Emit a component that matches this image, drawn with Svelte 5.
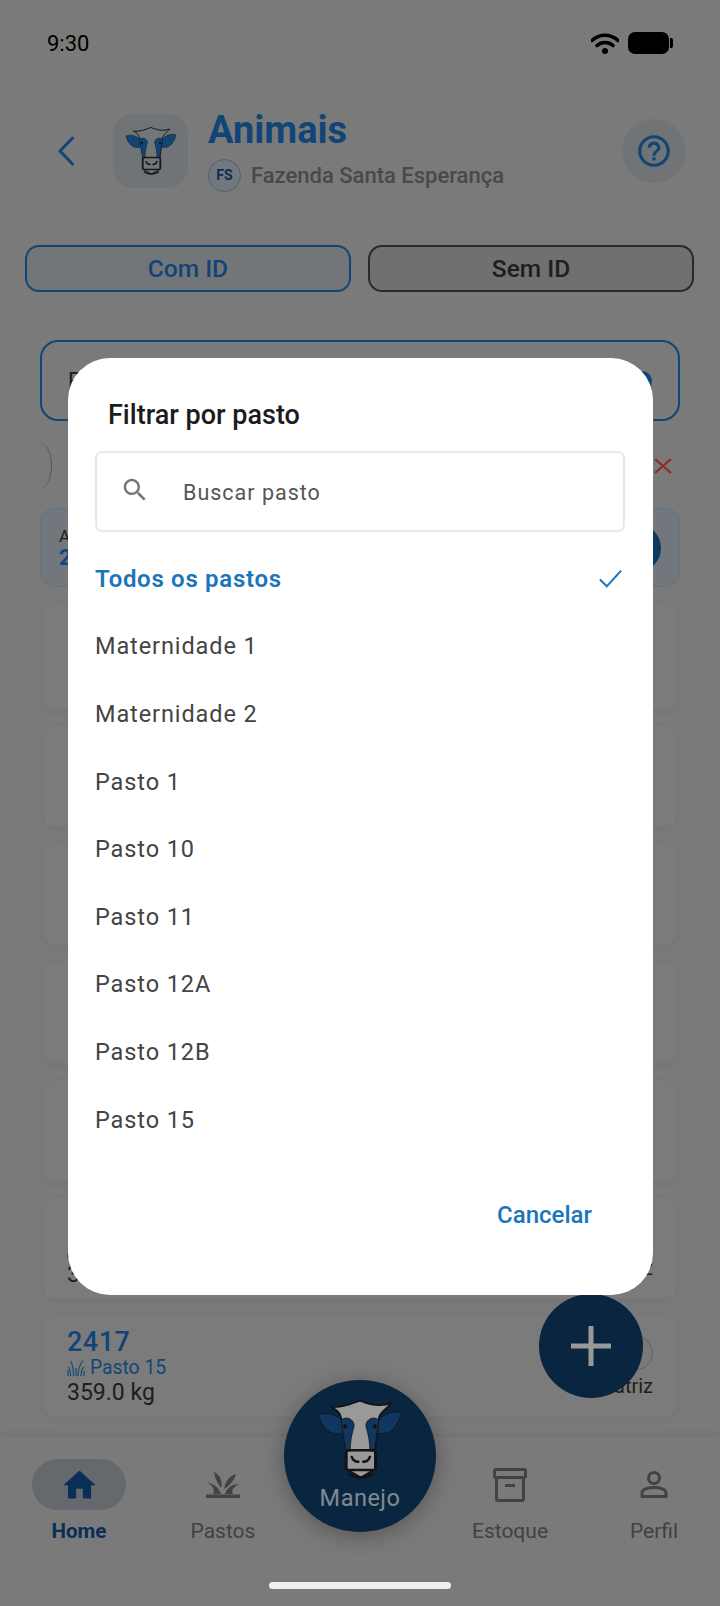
<script>
  // only the last two cards show above and below the modal
  let cards = [
    {}, {}, {}, {}, {},
    { id: '2415', pasto: 'Pasto 15', peso: '347.0 kg', tipo: 'Matriz' },
    { id: '2417', pasto: 'Pasto 15', peso: '359.0 kg', tipo: 'Matriz' }
  ];

  let pastos = ['Maternidade 1', 'Maternidade 2', 'Pasto 1', 'Pasto 10', 'Pasto 11', 'Pasto 12A', 'Pasto 12B', 'Pasto 15'];
</script>

{#snippet cow(cls)}
  <svg class={cls} viewBox="-2 -3 104 100">
    <path class="ear" d="M0 17C10 13 22 17 29 25L31 38C20 44 5 38 0 17Z" />
    <path class="ear" d="M100 15C90 11 78 16 71 25L69 38C80 44 95 37 100 15Z" />
    <path class="face" d="M15 7C26 9 36 5 50 0C62 5 74 8 87 3C82 11 75 13 73 20L68 60L68 83L51 93L34 83L34 60L27 20C25 13 21 11 15 7Z" />
    <path class="patch" d="M27 24C33 18 42 22 43 30C40 40 38 50 38 61L33 61Z" />
    <path class="patch" d="M73 24C67 18 58 22 57 30C60 40 62 50 62 61L67 61Z" />
    <circle class="eye" cx="32" cy="31" r="2.500" />
    <circle class="eye" cx="68" cy="31" r="2.500" />
    <path class="line" d="M36 60H66Q69 60 69 63V81Q69 84 66 84H36Q33 84 33 81V63Q33 60 36 60Z" />
    <path class="line" d="M40 68Q42 74 48 74M62 68Q60 74 54 74M37 89Q50 97 65 89" />
  </svg>
{/snippet}

<div class="page">
  <div class="status">
    <span class="time">9:30</span>
    <div class="status-icons">
      <svg class="wifi" viewBox="0 0 28 21">
        <path d="M1 7.500C8.500 .5 19.500 .5 27 7.500" />
        <path d="M6 12.500C10.500 8.500 17.500 8.500 22 12.500" />
        <circle cx="14" cy="18" r="3" />
      </svg>
      <div class="battery"></div>
    </div>
  </div>

  <div class="header">
    <svg class="back" viewBox="0 0 18 30"><path d="M15.500 2L3 15L15.500 28" /></svg>
    <div class="tile">{@render cow('cow-small')}</div>
    <div class="heading">
      <div class="title">Animais</div>
      <div class="farm">
        <span class="badge">FS</span>
        <span>Fazenda Santa Esperança</span>
      </div>
    </div>
    <div class="help">
      <svg viewBox="0 0 24 24"><path d="M11 18h2v-2h-2v2zm1-16C6.480 2 2 6.480 2 12s4.480 10 10 10 10-4.480 10-10S17.520 2 12 2zm0 18c-4.410 0-8-3.590-8-8s3.590-8 8-8 8 3.590 8 8-3.590 8-8 8zm0-14c-2.210 0-4 1.790-4 4h2c0-1.100.9-2 2-2s2 .9 2 2c0 2-3 1.750-3 5h2c0-2.250 3-2.500 3-5 0-2.210-1.790-4-4-4z" /></svg>
    </div>
  </div>

  <div class="tabs">
    <div class="tab active">Com ID</div>
    <div class="tab">Sem ID</div>
  </div>

  <div class="search">
    <span>P</span>
    <span class="search-dot"></span>
  </div>

  <div class="filters">
    <span class="chip"></span>
    <svg class="clear" viewBox="0 0 20 18"><path d="M2 2L18 16M18 2L2 16" /></svg>
  </div>

  <div class="summary">
    <div>
      <div class="summary-label">A</div>
      <div class="summary-value">2</div>
    </div>
    <span class="summary-dot"></span>
  </div>

  <div class="list">
    {#each cards as card}
      <div class="card">
        <div>
          {#if card.id}
            <div class="card-id">{card.id}</div>
            <div class="card-pasto">
              <svg viewBox="0 0 18 18"><path d="M1 17L1 11M3.500 17C3.500 13 3 10 1.500 8M6.500 17C6.500 11 6 6 3.500 2M9 17V9M11 17C11 11 12.500 6 16 1.500M14 17C14 13 15 10 17 8M17 17V12" /></svg>
              <span>{card.pasto}</span>
            </div>
            <div class="card-peso">{card.peso}</div>
          {/if}
        </div>
        <div class="card-right">
          <span class="card-dot"></span>
          {#if card.tipo}<span>{card.tipo}</span>{/if}
        </div>
      </div>
    {/each}
  </div>

  <div class="fab">
    <svg viewBox="0 0 40 40"><path d="M20 0V40M0 20H40" /></svg>
  </div>

  <nav class="nav">
    <div class="nav-item current">
      <div class="pill">
        <svg class="ic-home" viewBox="2 3 20 17"><path d="M10 19.500v-5.500h4v5.500q0 .5.5.5h4q.5 0 .5-.5v-7.500h2.300q.5 0 .2-.4L12.300 3.300q-.3-.3-.6 0L2.500 11.600q-.3.4.2.400H5v7.500q0 .5.5.5h4q.5 0 .5-.5z" /></svg>
      </div>
      <span>Home</span>
    </div>
    <div class="nav-item">
      <div class="pill">
        <svg class="ic-grass" viewBox="0 0 34 26">
          <path d="M0 26V22.500H34V26Z" />
          <path d="M1 10C8 12 13 16 15 22H7C9 20 8 14 1 10Z" />
          <path d="M33 12C26 12 21 16 19 22H27C25 19 27 15 33 12Z" />
          <path d="M8 0C14 3 17 9 15 16C12 12 9 7 8 0Z" />
          <path d="M30 2C23 4 19 10 18 17C23 14 28 9 30 2Z" />
        </svg>
      </div>
      <span>Pastos</span>
    </div>
    <div class="nav-gap"></div>
    <div class="nav-item">
      <div class="pill">
        <svg class="ic-box" viewBox="0 0 34 34">
          <rect x="1.500" y="1.500" width="31" height="8" rx="1.500" />
          <path d="M3.500 9.500V31Q3.500 32.500 5 32.500H29Q30.500 32.500 30.500 31V9.500" />
          <path d="M12 17.500H22" />
        </svg>
      </div>
      <span>Estoque</span>
    </div>
    <div class="nav-item">
      <div class="pill">
        <svg class="ic-person" viewBox="0 0 28 27">
          <circle cx="14" cy="7" r="5.500" />
          <path d="M2 25.500V21.500C2 18.500 8 16.500 14 16.500C20 16.500 26 18.500 26 21.500V25.500Z" />
        </svg>
      </div>
      <span>Perfil</span>
    </div>

    <div class="manejo">
      {@render cow('cow-big')}
      <span>Manejo</span>
    </div>
  </nav>

  <div class="scrim">
    <div class="dialog">
      <div class="dialog-title">Filtrar por pasto</div>
      <div class="field">
        <svg viewBox="0 0 24 24"><path d="M15.500 14h-.79l-.28-.27C15.410 12.590 16 11.110 16 9.500 16 5.910 13.090 3 9.500 3S3 5.910 3 9.500 5.910 16 9.500 16c1.610 0 3.090-.59 4.230-1.570l.27.28v.79l5 4.990L20.490 19l-4.990-5zm-6 0C7.010 14 5 11.990 5 9.500S7.010 5 9.500 5 14 7.010 14 9.500 11.990 14 9.500 14z" /></svg>
        <span>Buscar pasto</span>
      </div>
      <div class="options">
        <div class="option selected">
          <span>Todos os pastos</span>
          <svg viewBox="0 0 25 20"><path d="M1 11L8.500 18.500L24 1.500" /></svg>
        </div>
        {#each pastos as pasto}
          <div class="option">{pasto}</div>
        {/each}
      </div>
      <div class="actions">Cancelar</div>
    </div>
  </div>

  <div class="home-bar"></div>
</div>

<style>
  :global(body) {
    margin: 0;
  }

  .page {
    --brand: #1e74c6;
    --ink: #333;
    --muted: #6e6e6e;
    --deep: #113e6b;
    position: relative;
    width: 720px;
    height: 1606px;
    overflow: hidden;
    display: flex;
    flex-direction: column;
    background: #cbcbcb;
    font-family: Roboto, "Liberation Sans", sans-serif;
    color: var(--ink);
  }

  /* status bar */
  .status {
    height: 86px;
    flex: none;
    display: flex;
    align-items: center;
    justify-content: space-between;
    padding: 0 48px 0 47px;
    box-sizing: border-box;
  }

  .time {
    font-size: 22px;
    color: #000;
  }

  .status-icons {
    display: flex;
    align-items: center;
    gap: 9px;
  }

  .wifi {
    width: 28px;
    height: 21px;
    fill: none;
  }

  .wifi path {
    stroke: #000;
    stroke-width: 3.600;
    stroke-linecap: round;
  }

  .wifi circle {
    fill: #000;
  }

  .battery {
    position: relative;
    width: 41px;
    height: 22px;
    background: #000;
    border-radius: 7px;
    margin-right: 3px;
  }

  .battery::after {
    content: "";
    position: absolute;
    right: -4px;
    top: 6px;
    width: 3px;
    height: 10px;
    background: #000;
    border-radius: 0 2px 2px 0;
  }

  /* header */
  .header {
    flex: none;
    height: 74px;
    margin-top: 28px;
    padding-left: 57px;
    padding-right: 34px;
    display: flex;
    align-items: center;
  }

  .back {
    width: 18px;
    height: 30px;
    fill: none;
    stroke: var(--brand);
    stroke-width: 3;
    stroke-linecap: round;
    stroke-linejoin: round;
  }

  .tile {
    width: 75px;
    height: 74px;
    margin-left: 38px;
    border-radius: 20px;
    background: #bcc2c7;
    display: flex;
    align-items: center;
    justify-content: center;
  }

  .cow-small {
    width: 52px;
    height: 50px;
    --face: #c0c5ca;
    --line: #26282b;
    --ear: #1e74c6;
  }

  .cow-big {
    width: 86px;
    height: 83px;
    flex: none;
    --face: #fff;
    --line: #1f1f1f;
    --ear: #1a5c9e;
  }

  .ear {
    fill: var(--ear);
    stroke: var(--line);
    stroke-width: 1;
  }

  .face {
    fill: var(--face);
    stroke: var(--line);
    stroke-width: 2;
  }

  .patch {
    fill: var(--ear);
    stroke: var(--line);
    stroke-width: 1;
  }

  .eye {
    fill: var(--line);
  }

  .line {
    fill: none;
    stroke: var(--line);
    stroke-width: 3;
    stroke-linecap: round;
  }

  .heading {
    flex: 1;
    margin-left: 20px;
    margin-top: 6px;
  }

  .title {
    font-size: 38px;
    font-weight: 700;
    line-height: 44px;
    margin-top: -9px;
    color: var(--brand);
  }

  .farm {
    display: flex;
    align-items: center;
    gap: 10px;
    margin-top: 7px;
    font-size: 22px;
    font-weight: 500;
    color: #7a7a7a;
  }

  .badge {
    width: 33px;
    height: 33px;
    box-sizing: border-box;
    border-radius: 50%;
    border: 1.500px solid #7fa3c6;
    background: #c0c9d1;
    display: flex;
    align-items: center;
    justify-content: center;
    font-size: 14px;
    font-weight: 700;
    color: #114e8e;
  }

  .help {
    width: 64px;
    height: 64px;
    border-radius: 50%;
    background: #bcc2c7;
    display: flex;
    align-items: center;
    justify-content: center;
  }

  .help svg {
    width: 38px;
    height: 38px;
    fill: var(--brand);
  }

  /* tabs */
  .tabs {
    flex: none;
    margin-top: 57px;
    padding: 0 26px 0 25px;
    display: grid;
    grid-template-columns: 1fr 1fr;
    gap: 17px;
  }

  .tab {
    height: 47px;
    box-sizing: border-box;
    border: 2px solid #464646;
    border-radius: 14px;
    background: #bbbbbe;
    display: flex;
    align-items: center;
    justify-content: center;
    font-size: 24.500px;
    font-weight: 500;
  }

  .tab.active {
    border-color: var(--brand);
    background: #bfc5ca;
    color: var(--brand);
  }

  /* search */
  .search {
    flex: none;
    margin: 48px 40px 0;
    height: 81px;
    box-sizing: border-box;
    border: 2px solid var(--brand);
    border-radius: 18px;
    padding: 0 26px;
    display: flex;
    align-items: center;
    justify-content: space-between;
    font-size: 22px;
  }

  .search-dot {
    width: 20px;
    height: 20px;
    border-radius: 50%;
    background: var(--brand);
  }

  .filters {
    flex: none;
    height: 47px;
    margin-top: 21px;
    display: flex;
    align-items: center;
    justify-content: space-between;
    padding-right: 47px;
  }

  .chip {
    width: 13px;
    height: 47px;
    margin-left: 39px;
    box-sizing: border-box;
    border-right: 1.500px solid #8e8e8e;
    border-radius: 0 100% 100% 0 / 0 50% 50% 0;
  }

  .clear {
    width: 20px;
    height: 18px;
    fill: none;
    stroke: #f04545;
    stroke-width: 2.200;
  }

  .summary {
    flex: none;
    margin: 19px 40px 0;
    height: 79px;
    box-sizing: border-box;
    padding: 0 18px;
    border: 1.500px solid #9ec1e3;
    border-radius: 14px;
    background: #bcc6d0;
    display: flex;
    align-items: center;
    justify-content: space-between;
  }

  .summary-label {
    font-size: 17px;
    line-height: 20px;
  }

  .summary-value {
    font-size: 22px;
    line-height: 24px;
    font-weight: 700;
    color: var(--brand);
  }

  .summary-dot {
    width: 48px;
    height: 48px;
    border-radius: 50%;
    background: #1a5f9f;
  }

  /* animal cards */
  .list {
    flex: none;
    margin-top: 17px;
    padding: 0 44px;
    display: flex;
    flex-direction: column;
    gap: 17px;
  }

  .card {
    height: 101px;
    box-sizing: border-box;
    padding: 12px 23px;
    border-radius: 12px;
    background: #cdcdcd;
    box-shadow: 0 2px 10px rgba(0, 0, 0, 0.05);
    display: flex;
    justify-content: space-between;
    align-items: center;
  }

  .card:first-child {
    height: 105px;
  }

  .card-id {
    font-size: 27px;
    line-height: 28px;
    margin-top: 1px;
    font-weight: 500;
    letter-spacing: 0.5px;
    color: var(--brand);
  }

  .card-pasto {
    display: flex;
    align-items: center;
    gap: 5px;
    font-size: 19.300px;
    line-height: 24px;
    color: var(--brand);
  }

  .card-pasto svg {
    width: 18px;
    height: 18px;
    fill: none;
    stroke: var(--brand);
    stroke-width: 1.100;
  }

  .card-peso {
    font-size: 23px;
    line-height: 26px;
  }

  .card-right {
    display: flex;
    flex-direction: column;
    align-items: flex-end;
    gap: 4px;
    font-size: 20px;
  }

  .card-dot {
    width: 34px;
    height: 34px;
    box-sizing: border-box;
    border-radius: 50%;
    border: 1px solid #9aa89a;
    background: #c8cdc4;
  }

  .fab {
    position: absolute;
    left: 539px;
    top: 1294px;
    width: 104px;
    height: 104px;
    border-radius: 50%;
    background: var(--deep);
    display: flex;
    align-items: center;
    justify-content: center;
    z-index: 2;
  }

  .fab svg {
    width: 40px;
    height: 40px;
    fill: none;
    stroke: #fff;
    stroke-width: 5;
  }

  /* bottom nav */
  .nav {
    position: relative;
    flex: none;
    margin-top: auto;
    height: 169px;
    box-sizing: border-box;
    padding: 22px 19px 0 32px;
    display: flex;
    gap: 50px;
    background: #cbcbcb;
    box-shadow: 0 -3px 10px rgba(0, 0, 0, 0.05);
  }

  .nav-gap {
    width: 93px;
    flex: none;
  }

  .nav-item {
    width: 94px;
    flex: none;
    display: flex;
    flex-direction: column;
    align-items: center;
    gap: 8px;
    font-size: 21px;
    line-height: 26px;
    white-space: nowrap;
    color: var(--muted);
  }

  .pill {
    width: 94px;
    height: 51px;
    border-radius: 26px;
    display: flex;
    align-items: center;
    justify-content: center;
  }

  .nav-item.current {
    font-weight: 700;
    font-size: 20.500px;
    color: #114e8e;
  }

  .nav-item.current .pill {
    background: #a8afb7;
  }

  .ic-home {
    width: 33px;
    height: 29px;
    fill: #114e8e;
  }

  .ic-grass {
    width: 34px;
    height: 26px;
    fill: var(--muted);
  }

  .ic-box {
    width: 34px;
    height: 34px;
    fill: none;
    stroke: var(--muted);
    stroke-width: 3;
  }

  .ic-person {
    width: 28px;
    height: 27px;
    fill: none;
    stroke: var(--muted);
    stroke-width: 3;
    stroke-linejoin: round;
  }

  .manejo {
    position: absolute;
    left: 284px;
    top: -57px;
    width: 152px;
    height: 152px;
    box-sizing: border-box;
    padding-top: 18px;
    border-radius: 50%;
    background: var(--deep);
    box-shadow: 0 4px 22px rgba(0, 0, 0, 0.3);
    display: flex;
    flex-direction: column;
    align-items: center;
    font-size: 23.500px;
    line-height: 28px;
    letter-spacing: 0.5px;
    color: #d8e4f0;
  }

  .manejo span {
    margin-top: 3px;
  }

  /* modal */
  .scrim {
    position: absolute;
    inset: 0;
    z-index: 3;
    box-sizing: border-box;
    padding: 358px 67px 0 68px;
    background: rgba(0, 0, 0, 0.4);
  }

  .dialog {
    height: 937px;
    box-sizing: border-box;
    padding-top: 38px;
    background: #fff;
    border-radius: 42px;
  }

  .dialog-title {
    padding-left: 40px;
    font-size: 27px;
    line-height: 38px;
    font-weight: 500;
    color: #1c1c1c;
  }

  .field {
    margin: 17px 28px 0 27px;
    height: 81px;
    box-sizing: border-box;
    padding-left: 23px;
    border: 2px solid #e8e8e8;
    border-radius: 7px;
    display: flex;
    align-items: center;
    gap: 33px;
    font-size: 21.500px;
    letter-spacing: 1px;
    color: #555;
  }

  .field span {
    padding-top: 2px;
  }

  .field svg {
    width: 30px;
    height: 30px;
    fill: #777;
    margin-top: -4px;
  }

  .options {
    margin-top: 13px;
    padding: 0 29px 0 27px;
  }

  .option {
    height: 67.600px;
    display: flex;
    align-items: center;
    justify-content: space-between;
    font-size: 23.500px;
    letter-spacing: 0.9px;
    color: #444;
  }

  .option.selected {
    font-weight: 600;
    font-size: 24px;
    letter-spacing: 0.7px;
    color: #1b75bb;
  }

  .option svg {
    width: 23px;
    height: 19px;
    margin-right: 2px;
    fill: none;
    stroke: #1b75bb;
    stroke-width: 2.200;
  }

  .actions {
    margin-top: 47px;
    padding-right: 61px;
    text-align: right;
    font-size: 24px;
    line-height: 30px;
    font-weight: 500;
    color: #1b75bb;
  }

  .home-bar {
    position: absolute;
    left: 269px;
    top: 1582px;
    width: 182px;
    height: 7px;
    border-radius: 4px;
    background: #f0f0f0;
    z-index: 4;
  }
</style>
